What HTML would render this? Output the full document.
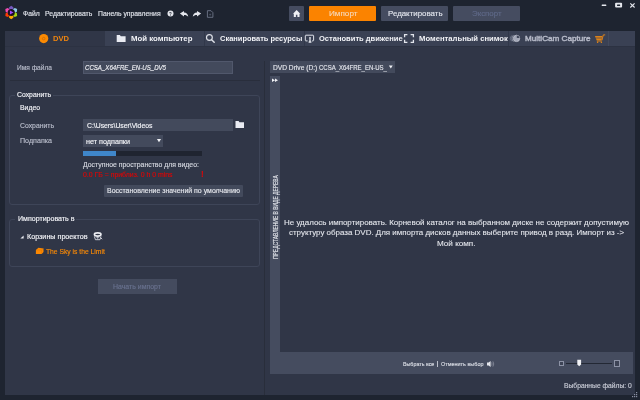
<!DOCTYPE html>
<html lang="ru"><head><meta charset="utf-8"><title>Импорт</title>
<style>
html,body{margin:0;padding:0}
body{width:640px;height:400px;overflow:hidden;background:#1e2430;position:relative;font-family:"Liberation Sans",sans-serif}
.b{position:absolute;box-sizing:border-box}
.t{position:absolute;white-space:pre;line-height:12px;height:12px;transform-origin:0 50%;font-family:"Liberation Sans",sans-serif}
#tx{position:absolute;left:0;top:0;width:640px;height:400px;will-change:transform}
svg{position:absolute;left:0;top:0;width:640px;height:400px;overflow:visible}
</style></head><body>
<!-- main panel -->
<div class="b" style="left:5px;top:31px;width:630px;height:363.7px;background:#303647"></div>
<!-- tab bar -->
<div class="b" style="left:104.6px;top:31px;width:530.4px;height:15.2px;background:#3a4154"></div>
<div class="b" style="left:204.3px;top:31px;width:0.8px;height:15.2px;background:#31384a"></div>
<div class="b" style="left:304.1px;top:31px;width:0.8px;height:15.2px;background:#31384a"></div>
<div class="b" style="left:508.2px;top:31px;width:0.8px;height:15.2px;background:#31384a"></div>
<div class="b" style="left:607.5px;top:31px;width:0.8px;height:15.2px;background:#434a5d"></div>
<!-- top buttons -->
<div class="b" style="left:289px;top:6.2px;width:14.8px;height:14.9px;background:#454c60;border-radius:1px"></div>
<div class="b" style="left:308.7px;top:6.2px;width:67.7px;height:14.9px;background:#fb8300;border-radius:1px"></div>
<div class="b" style="left:380.5px;top:6.2px;width:67.6px;height:14.9px;background:#454c60;border-radius:1px"></div>
<div class="b" style="left:452.5px;top:6.2px;width:67.6px;height:14.9px;background:#454c60;border-radius:1px"></div>
<!-- left panel -->
<div class="b" style="left:83px;top:61px;width:149.6px;height:13px;background:#434a5c;border:0.7px solid #51586c"></div>
<div class="b" style="left:10px;top:80.4px;width:250px;height:0.9px;background:#292e3c"></div>
<div class="b" style="left:9.4px;top:95.4px;width:250.8px;height:109.3px;border:0.9px solid #3e4558;border-radius:3px"></div>
<div class="b" style="left:15px;top:92px;width:38px;height:7px;background:#303647"></div>
<div class="b" style="left:83px;top:118.6px;width:149.6px;height:12px;background:#434a5c"></div>
<div class="b" style="left:83px;top:135px;width:79.6px;height:11.6px;background:#434a5c"></div>
<div class="b" style="left:83px;top:150.9px;width:119px;height:4.8px;background:#1f2430"></div>
<div class="b" style="left:83px;top:150.9px;width:33.2px;height:4.8px;background:#3f86c9"></div>
<div class="b" style="left:104px;top:185px;width:139.3px;height:11.6px;background:#434a5c;border-radius:1px"></div>
<div class="b" style="left:9.4px;top:219px;width:250.8px;height:47.8px;border:0.9px solid #3e4558;border-radius:3px"></div>
<div class="b" style="left:15px;top:215px;width:61px;height:7px;background:#303647"></div>
<div class="b" style="left:97.8px;top:279px;width:79px;height:14.8px;background:#444b5e"></div>
<!-- divider -->
<div class="b" style="left:264.2px;top:61px;width:0.9px;height:333.7px;background:#292e3b"></div>
<div class="b" style="left:5px;top:46.2px;width:630px;height:1px;background:#2c3242"></div>
<!-- right panel -->
<div class="b" style="left:270px;top:61px;width:125px;height:12px;background:#434a5c"></div>
<div class="b" style="left:270px;top:76px;width:10px;height:298px;background:#454c5f"></div>
<div class="b" style="left:270px;top:351.8px;width:363px;height:22.2px;background:#454c5f"></div>
<div class="b" style="left:437.1px;top:360.6px;width:0.7px;height:6.8px;background:#bcc0cb"></div>
<!-- slider -->
<div class="b" style="left:566px;top:362.9px;width:46px;height:1.1px;background:#232834"></div>
<div class="b" style="left:559.3px;top:361.3px;width:4.3px;height:4.3px;border:0.7px solid #8c92a5;background:#3d4355"></div>
<div class="b" style="left:614.1px;top:360.4px;width:5.9px;height:6.2px;border:0.7px solid #8c92a5;background:#3d4355"></div>
<svg viewBox="0 0 640 400">
<!-- logo -->
<g transform="translate(11.25 12.5)">
<g id="pet"></g>
<path d="M-2.1,-2.6L-2.1,-5.3L0,-6.8L2.1,-5.3L2.1,-2.6Z" fill="#7458be"/>
<path d="M-2.1,-2.6L-2.1,-5.3L0,-6.8L2.1,-5.3L2.1,-2.6Z" fill="#8ecbea" transform="rotate(60)"/>
<path d="M-2.1,-2.6L-2.1,-5.3L0,-6.8L2.1,-5.3L2.1,-2.6Z" fill="#a5d616" transform="rotate(120)"/>
<path d="M-2.1,-2.6L-2.1,-5.3L0,-6.8L2.1,-5.3L2.1,-2.6Z" fill="#ffa700" transform="rotate(180)"/>
<path d="M-2.1,-2.6L-2.1,-5.3L0,-6.8L2.1,-5.3L2.1,-2.6Z" fill="#ff3d00" transform="rotate(240)"/>
<path d="M-2.1,-2.6L-2.1,-5.3L0,-6.8L2.1,-5.3L2.1,-2.6Z" fill="#f04bb2" transform="rotate(300)"/>
<circle r="3.6" fill="#1a1320"/>
<path d="M-1.3,-2.1L2.3,0L-1.3,2.1Z" fill="#a246ff"/>
</g>
<!-- help -->
<circle cx="170.5" cy="13.4" r="3" fill="#e4e6ec"/>
<!-- undo -->
<path id="undo" d="M179.9,13.6L184,10.9L184,12.6C186.6,12.7 188,14.4 188.2,16.8C187.2,15.5 186,14.9 184,14.9L184,16.4Z" fill="#e4e6ec"/>
<path d="M201.1,13.6L197,10.9L197,12.6C194.4,12.7 193,14.4 192.8,16.8C193.8,15.5 195,14.9 197,14.9L197,16.4Z" fill="#e4e6ec"/>
<!-- doc -->
<path d="M207.4,10.7H211L212.9,12.6V17.3H207.4Z" fill="none" stroke="#747b8f" stroke-width="0.85" stroke-linejoin="round"/>
<path d="M209.2,14.6H211.2M210.2,13.6V15.6" stroke="#555c70" stroke-width="0.7" fill="none"/>
<!-- home -->
<path d="M293,13.8L296.65,10.1L300.3,13.8L299.5,13.8V17H297.4V14.8H295.9V17H293.8V13.8Z" fill="#f0f1f5"/>
<!-- window ctrls -->
<rect x="601.7" y="4.4" width="4.6" height="1.7" rx="0.5" fill="#e6e8ee"/>
<rect x="615.1" y="2.8" width="7" height="4.8" rx="1" fill="#e6e8ee"/>
<rect x="617" y="4.6" width="3.2" height="1.3" rx="0.4" fill="#1e2430"/>
<path d="M630.3,3.3L634.6,7.5M634.6,3.3L630.3,7.5" stroke="#e6e8ee" stroke-width="1.1" fill="none"/>
<!-- DVD disc -->
<circle cx="43.7" cy="38.6" r="4.6" fill="#fc8a02"/>
<circle cx="43.7" cy="38.6" r="1.3" fill="none" stroke="#c66a08" stroke-width="0.7"/>
<!-- folder tab icon -->
<path d="M116.7,35.1H119.9L120.8,36.3H125.6V41.9H116.7Z" fill="#e9ebf2"/>
<!-- search -->
<circle cx="209.4" cy="37.5" r="2.9" fill="none" stroke="#dcdfe6" stroke-width="1.2"/>
<path d="M211.6,39.8L214.2,42.3" stroke="#dcdfe6" stroke-width="1.5" stroke-linecap="round"/>
<!-- stop motion -->
<path d="M307.6,40.9H305.9Q305.3,40.9 305.3,40.3V35.8Q305.3,35.2 305.9,35.2H313Q313.6,35.2 313.6,35.8V40.3Q313.6,40.9 313,40.9H312" fill="none" stroke="#dfe2e9" stroke-width="1"/>
<circle cx="310" cy="37.9" r="0.9" fill="#e6e8ee"/>
<path d="M309.5,38.5H310.5L310.8,41.6H311.4V42.8H308.6V41.6H309.2Z" fill="#e6e8ee"/>
<!-- brackets -->
<path d="M404.6,37.2V34.6H407.4M410.6,34.6H413.4V37.2M413.4,39.8V42.4H410.6M407.4,42.4H404.6V39.8" fill="none" stroke="#e2e5ec" stroke-width="1.3"/>
<!-- multicam -->
<circle cx="516.5" cy="38.4" r="3.2" fill="#a2a7b7" stroke="#c6c9d4" stroke-width="0.7"/>
<path d="M516.8,38.1V35.4A2.8,2.8 0 0 1 519.5,38.1Z" fill="#3f465a"/>
<path d="M513.4,35.2A4.3,4.3 0 0 0 513.4,41.6" fill="none" stroke="#9298aa" stroke-width="1"/>
<path d="M511.5,35.6A4.3,4.3 0 0 0 511.5,41.2" fill="none" stroke="#737a8e" stroke-width="0.9"/>
<!-- cart -->
<path d="M595,35.9H602.3L601.4,40.2H596.6Z" fill="#ef8a14"/>
<path d="M595.6,37.3H602M596,38.7H601.7" stroke="#3a4154" stroke-width="0.5"/>
<path d="M601.6,41H596.8M601.9,40.4L603.3,34.9H605.2" fill="none" stroke="#ef8a14" stroke-width="0.9"/>
<circle cx="597.6" cy="42.3" r="0.75" fill="#ef8a14"/><circle cx="601.4" cy="42.3" r="0.75" fill="#ef8a14"/>
<!-- browse folder icon -->
<path d="M235.5,121.1H238.6L239.4,122.2H244V128H235.5Z" fill="#e9ebf2"/>
<!-- dropdown arrows -->
<path d="M156.9,138.9H161.1L159,142.2Z" fill="#f0f1f5"/>
<path d="M388.9,65.4H392.7L390.8,68.6Z" fill="#f0f1f5"/>
<!-- tree triangle -->
<path d="M23.6,235.4V238.6H20.4Z" fill="#e9ebf2"/>
<!-- bins icon -->
<ellipse cx="97.7" cy="234.5" rx="3.3" ry="1.6" fill="none" stroke="#eceef3" stroke-width="1.6"/>
<path d="M94.4,236.4L95.4,239.7H100L101,236.4" fill="none" stroke="#d6d9e1" stroke-width="0.9"/>
<path d="M96.2,237.6H99.2M97.7,237V239.6" stroke="#c4c8d2" stroke-width="0.7"/>
<path d="M100.6,237.6L102.2,239.2" stroke="#d6d9e1" stroke-width="0.9"/>
<!-- orange project folder -->
<path d="M35.9,250L38.4,247.8L43.5,248.5V252L41.7,254H35.9Z" fill="#fb8802"/>
<path d="M36,250H41.6L43.4,248.6M41.6,250V254" fill="none" stroke="#d97200" stroke-width="0.4"/>
<!-- >> -->
<path d="M272,78.6L275,80.3L272,82ZM275,78.6L278,80.3L275,82Z" fill="#f0f1f5"/>
<!-- speaker -->
<path d="M487,362.6H488.6L490.6,361V367L488.6,365.4H487Z" fill="#e4e6ec"/>
<path d="M491.6,362.4Q492.6,364 491.6,365.6M492.9,361.4Q494.6,364 492.9,366.6" fill="none" stroke="#b4b8c5" stroke-width="0.5"/>
<!-- slider thumb -->
<path d="M577.3,359.8H581.1V364.6L579.2,366.3L577.3,364.6Z" fill="#f2f3f6"/>
<!-- grip -->
<g fill="#8a90a3" transform="translate(-0.2 0.8)"><rect x="636.2" y="391.2" width="1.2" height="1.2"/><rect x="634.2" y="393.2" width="1.2" height="1.2"/><rect x="636.2" y="393.2" width="1.2" height="1.2"/><rect x="632.2" y="395.2" width="1.2" height="1.2"/><rect x="634.2" y="395.2" width="1.2" height="1.2"/><rect x="636.2" y="395.2" width="1.2" height="1.2"/></g>
</svg>
<div id="tx">
<span class="t" style="left:22.5px;top:7.60px;font-size:7.0px;color:#e0e3ea;transform:scaleX(0.9699);-webkit-text-stroke:0.15px">Файл</span>
<span class="t" style="left:45.2px;top:7.60px;font-size:7.0px;color:#e0e3ea;transform:scaleX(0.9781);-webkit-text-stroke:0.15px">Редактировать</span>
<span class="t" style="left:98.4px;top:7.60px;font-size:7.0px;color:#e0e3ea;transform:scaleX(0.9734);-webkit-text-stroke:0.15px">Панель управления</span>
<span class="t" style="left:169.2px;top:7.50px;font-size:5.6px;color:#1e2430;transform:scaleX(0.7890);font-weight:700">?</span>
<span class="t" style="left:328.5px;top:8.20px;font-size:7.7px;color:#f6d6b6;transform:scaleX(1.0598);-webkit-text-stroke:0.15px">Импорт</span>
<span class="t" style="left:387.5px;top:8.20px;font-size:7.7px;color:#dfe2ea;transform:scaleX(1.0262);-webkit-text-stroke:0.15px">Редактировать</span>
<span class="t" style="left:471.5px;top:8.20px;font-size:7.7px;color:#5f6988;transform:scaleX(1.0211);-webkit-text-stroke:0.15px">Экспорт</span>
<span class="t" style="left:53px;top:33.25px;font-size:7.6px;color:#f0850e;transform:scaleX(0.9971);font-weight:700">DVD</span>
<span class="t" style="left:130.5px;top:33.25px;font-size:7.6px;color:#f2f3f7;transform:scaleX(1.0296);font-weight:700">Мой компьютер</span>
<span class="t" style="left:219.6px;top:33.25px;font-size:7.6px;color:#f2f3f7;transform:scaleX(0.9833);font-weight:700">Сканировать ресурсы</span>
<span class="t" style="left:319.3px;top:33.25px;font-size:7.6px;color:#f2f3f7;transform:scaleX(0.9931);font-weight:700">Остановить движение</span>
<span class="t" style="left:418.6px;top:33.25px;font-size:7.6px;color:#f2f3f7;transform:scaleX(1.0100);font-weight:700">Моментальный снимок</span>
<span class="t" style="left:524.6px;top:33.25px;font-size:7.7px;color:#b6bac8;transform:scaleX(1.0556);-webkit-text-stroke:0.45px">MultiCam Capture</span>
<span class="t" style="left:17px;top:61.60px;font-size:7.0px;color:#b9bdcb;transform:scaleX(0.9428);-webkit-text-stroke:0.15px">Имя файла</span>
<span class="t" style="left:85.2px;top:61.80px;font-size:7.6px;color:#f2f3f7;transform:scaleX(0.8030);-webkit-text-stroke:0.15px;font-style:italic">CCSA_X64FRE_EN-US_DV5</span>
<span class="t" style="left:17px;top:89.00px;font-size:7.0px;color:#f2f3f7;transform:scaleX(0.9771);-webkit-text-stroke:0.15px">Сохранить</span>
<span class="t" style="left:20px;top:102.00px;font-size:7.0px;color:#f2f3f7;transform:scaleX(0.9778);-webkit-text-stroke:0.15px">Видео</span>
<span class="t" style="left:20px;top:119.50px;font-size:7.0px;color:#b9bdcb;transform:scaleX(0.9771);-webkit-text-stroke:0.15px">Сохранить</span>
<span class="t" style="left:86.6px;top:119.80px;font-size:7.0px;color:#f2f3f7;transform:scaleX(0.9736);-webkit-text-stroke:0.15px">C:\Users\User\Videos</span>
<span class="t" style="left:20px;top:135.40px;font-size:7.0px;color:#b9bdcb;transform:scaleX(1.0174);-webkit-text-stroke:0.15px">Подпапка</span>
<span class="t" style="left:85.5px;top:135.90px;font-size:7.0px;color:#f2f3f7;transform:scaleX(1.0292);-webkit-text-stroke:0.15px">нет подпапки</span>
<span class="t" style="left:82.5px;top:159.00px;font-size:7.0px;color:#d3d6de;transform:scaleX(0.9834);-webkit-text-stroke:0.15px">Доступное пространство для видео:</span>
<span class="t" style="left:82.5px;top:168.60px;font-size:7.0px;color:#dc0606;transform:scaleX(0.9866);-webkit-text-stroke:0.15px">0.0 ГБ = приблиз. 0 h 0 mins</span>
<span class="t" style="left:201.1px;top:167.60px;font-size:8.4px;color:#ee0000;transform:scaleX(0.9296);font-weight:700">!</span>
<span class="t" style="left:107px;top:185.40px;font-size:7.0px;color:#e3e5eb;transform:scaleX(0.9957);-webkit-text-stroke:0.15px">Восстановление значений по умолчанию</span>
<span class="t" style="left:17.5px;top:212.60px;font-size:7.0px;color:#f2f3f7;transform:scaleX(1.0075);-webkit-text-stroke:0.15px">Импортировать в</span>
<span class="t" style="left:27px;top:230.60px;font-size:7.0px;color:#f2f3f7;transform:scaleX(1.0252);-webkit-text-stroke:0.15px">Корзины проектов</span>
<span class="t" style="left:46.2px;top:245.60px;font-size:7.0px;color:#fa8a06;transform:scaleX(0.9627);-webkit-text-stroke:0.15px">The Sky is the Limit</span>
<span class="t" style="left:113px;top:281.40px;font-size:7.0px;color:#69728f;transform:scaleX(0.9929);-webkit-text-stroke:0.15px">Начать импорт</span>
<span class="t" style="left:273px;top:61.75px;font-size:7.4px;color:#e3e5eb;transform:scaleX(0.8981);-webkit-text-stroke:0.15px">DVD Drive (D:) </span>
<span class="t" style="left:319.1px;top:61.75px;font-size:7.4px;color:#e3e5eb;transform:scaleX(0.8103);-webkit-text-stroke:0.15px">CCSA_X64FRE_EN-US_</span>
<span class="t" style="left:284px;top:216.60px;font-size:8.01px;color:#e3e5eb;transform:scaleX(0.9957);-webkit-text-stroke:0.1px">Не удалось импортировать. Корневой каталог на выбранном диске не содержит допустимую</span>
<span class="t" style="left:288.5px;top:227.40px;font-size:8.01px;color:#e3e5eb;transform:scaleX(0.9934);-webkit-text-stroke:0.1px">структуру образа DVD. Для импорта дисков данных выберите привод в разд. Импорт из -&gt;</span>
<span class="t" style="left:436.8px;top:237.70px;font-size:8.01px;color:#e3e5eb;transform:scaleX(1.0132);-webkit-text-stroke:0.1px">Мой комп.</span>
<span class="t" style="left:402.7px;top:357.80px;font-size:6.1px;color:#d9dce4;transform:scaleX(0.8732);-webkit-text-stroke:0.15px">Выбрать все</span>
<span class="t" style="left:440.5px;top:357.80px;font-size:6.1px;color:#d9dce4;transform:scaleX(0.8959);-webkit-text-stroke:0.15px">Отменить выбор</span>
<span class="t" style="left:563.6px;top:380.00px;font-size:7.2px;color:#cbced8;transform:scaleX(0.9358);-webkit-text-stroke:0.15px">Выбранные файлы: 0</span>
<span class="t" style="left:269.5px;top:259.2px;font-size:6.7px;color:#e3e5eb;-webkit-text-stroke:0.12px;transform-origin:0 0;transform:rotate(-90deg) scaleX(0.7380)">ПРЕДСТАВЛЕНИЕ В ВИДЕ ДЕРЕВА</span>
</div>
</body></html>
